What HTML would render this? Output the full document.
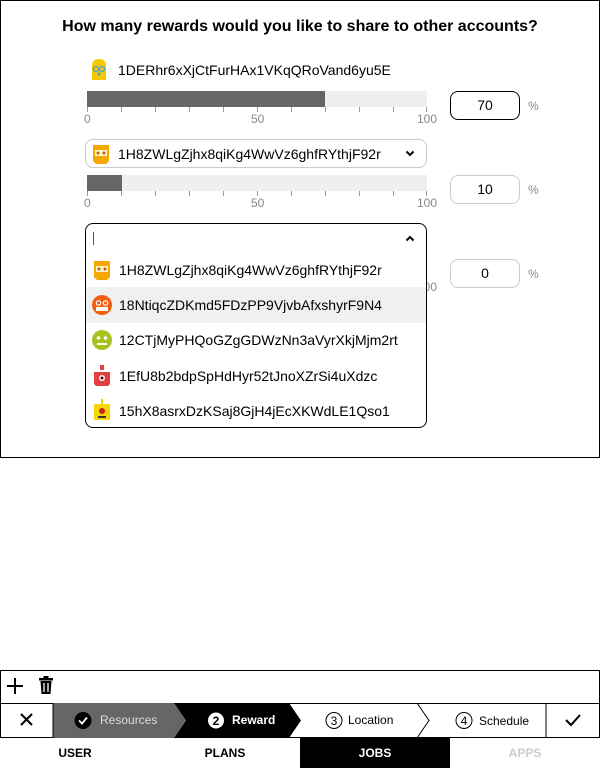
<!DOCTYPE html>
<html><head><meta charset="utf-8"><style>
*{box-sizing:border-box;margin:0;padding:0}
body{width:600px;height:768px;position:relative;background:#fff;font-family:"Liberation Sans",sans-serif;color:#000;overflow:hidden}
.a{position:absolute}
.title{left:0;top:18px;width:600px;text-align:center;font-weight:bold;font-size:16px}
.txt{font-size:14px;white-space:nowrap}
.bar{left:87px;width:340px;height:16px;background:#efefef}
.fill{left:0;top:0;height:16px;background:#666}
.tick{width:1px;height:5px;background:#999;top:16px}
.lbl{font-size:12px;color:#888}
.num{width:70px;height:29px;border-radius:8px;font-size:14px;text-align:center;line-height:27px}
.pct{font-size:12px;color:#888}
.item{left:0;width:340px;height:36px}
</style></head><body>
<div class="a" style="left:0;top:0;width:600px;height:458px;border:1px solid #000"></div>
<div class="a title">How many rewards would you like to share to other accounts?</div>

<svg class="a" style="left:88px;top:58px" width="22" height="24" viewBox="0 0 22 24"><path d="M4 22 L4 8 Q4 1 11 1 Q18 1 18 8 L18 22 Z" fill="#f5c800"/><circle cx="8" cy="11" r="2.5" fill="none" stroke="#4aa3df" stroke-width="1.3"/><circle cx="14" cy="11" r="2.5" fill="none" stroke="#4aa3df" stroke-width="1.3"/><circle cx="11" cy="16" r="1.5" fill="#4aa3df"/></svg>
<div class="a txt" style="left:118px;top:62px">1DERhr6xXjCtFurHAx1VKqQRoVand6yu5E</div>
<div class="a bar" style="top:91px"><div class="a fill" style="width:238px"></div>
<div class="a tick" style="left:0"></div><div class="a tick" style="left:34px"></div><div class="a tick" style="left:68px"></div><div class="a tick" style="left:102px"></div><div class="a tick" style="left:136px"></div><div class="a tick" style="left:170px"></div><div class="a tick" style="left:204px"></div><div class="a tick" style="left:238px"></div><div class="a tick" style="left:272px"></div><div class="a tick" style="left:306px"></div><div class="a tick" style="left:339px"></div></div>
<div class="a lbl" style="left:84px;top:112px">0</div><div class="a lbl" style="left:251px;top:112px">50</div><div class="a lbl" style="left:417px;top:112px">100</div>
<div class="a num" style="left:450px;top:91px;border:1px solid #000">70</div>
<div class="a pct" style="left:528px;top:99px">%</div>

<div class="a" style="left:85px;top:139px;width:342px;height:29px;border:1px solid #ccc;border-radius:8px"></div>
<svg class="a" style="left:90px;top:143px" width="22" height="22" viewBox="0 0 22 22"><path d="M3 2h16v16l-3 3H6l-3-3z" fill="#f5a800"/><rect x="5" y="7" width="12" height="6" fill="#fff" opacity=".8"/><circle cx="8" cy="10" r="1.5" fill="#b36b00"/><circle cx="14" cy="10" r="1.5" fill="#b36b00"/></svg>
<div class="a txt" style="left:118px;top:146px">1H8ZWLgZjhx8qiKg4WwVz6ghfRYthjF92r</div>
<svg class="a" style="left:405px;top:150px" width="10" height="7" viewBox="0 0 10 7"><path d="M1.5 1.5L5 5 8.5 1.5" fill="none" stroke="#000" stroke-width="2"/></svg>
<div class="a bar" style="top:175px"><div class="a fill" style="width:35px"></div>
<div class="a tick" style="left:0"></div><div class="a tick" style="left:34px"></div><div class="a tick" style="left:68px"></div><div class="a tick" style="left:102px"></div><div class="a tick" style="left:136px"></div><div class="a tick" style="left:170px"></div><div class="a tick" style="left:204px"></div><div class="a tick" style="left:238px"></div><div class="a tick" style="left:272px"></div><div class="a tick" style="left:306px"></div><div class="a tick" style="left:339px"></div></div>
<div class="a lbl" style="left:84px;top:196px">0</div><div class="a lbl" style="left:251px;top:196px">50</div><div class="a lbl" style="left:417px;top:196px">100</div>
<div class="a num" style="left:450px;top:175px;border:1px solid #ccc">10</div>
<div class="a pct" style="left:528px;top:183px">%</div>

<div class="a lbl" style="left:417px;top:280px">100</div>
<div class="a num" style="left:450px;top:259px;border:1px solid #ccc">0</div>
<div class="a pct" style="left:528px;top:267px">%</div>

<div class="a" style="left:85px;top:223px;width:342px;height:205px;border:1px solid #000;border-radius:8px;background:#fff;overflow:hidden">
<div class="a" style="left:7px;top:8px;width:1px;height:13px;background:#555"></div>
<svg class="a" style="left:319px;top:11px" width="10" height="7" viewBox="0 0 10 7"><path d="M1.5 5.5L5 2 8.5 5.5" fill="none" stroke="#000" stroke-width="2"/></svg>
<div class="a item" style="top:28px"><svg class="a" style="left:5px;top:7px" width="22" height="22" viewBox="0 0 22 22"><path d="M3 2h16v16l-3 3H6l-3-3z" fill="#f5a800"/><rect x="5" y="7" width="12" height="6" fill="#fff" opacity=".8"/><circle cx="8" cy="10" r="1.5" fill="#b36b00"/><circle cx="14" cy="10" r="1.5" fill="#b36b00"/></svg><div class="a txt" style="left:33px;top:10px">1H8ZWLgZjhx8qiKg4WwVz6ghfRYthjF92r</div></div>
<div class="a item" style="top:63px;background:#f0f0f0"><svg class="a" style="left:5px;top:7px" width="22" height="22" viewBox="0 0 22 22"><circle cx="11" cy="11" r="10" fill="#f06010"/><circle cx="7.5" cy="9" r="2.2" fill="none" stroke="#fff" stroke-width="1.2"/><circle cx="14.5" cy="9" r="2.2" fill="none" stroke="#fff" stroke-width="1.2"/><rect x="5" y="13" width="12" height="4" fill="#fff"/></svg><div class="a txt" style="left:33px;top:10px">18NtiqcZDKmd5FDzPP9VjvbAfxshyrF9N4</div></div>
<div class="a item" style="top:98px"><svg class="a" style="left:5px;top:7px" width="22" height="22" viewBox="0 0 22 22"><circle cx="11" cy="11" r="10" fill="#a8c020"/><circle cx="7.5" cy="9" r="1.8" fill="#fff"/><circle cx="14.5" cy="9" r="1.8" fill="#fff"/><rect x="6" y="14" width="10" height="2" fill="#fff"/></svg><div class="a txt" style="left:33px;top:10px">12CTjMyPHQoGZgGDWzNn3aVyrXkjMjm2rt</div></div>
<div class="a item" style="top:134px"><svg class="a" style="left:5px;top:6px" width="22" height="24" viewBox="0 0 22 24"><rect x="9" y="1" width="4" height="5" fill="#e04040"/><path d="M3 8h16v12l-2 2H5l-2-2z" fill="#e04040"/><circle cx="11" cy="14" r="3" fill="#fff"/><circle cx="11" cy="14" r="1.5" fill="#600"/></svg><div class="a txt" style="left:33px;top:10px">1EfU8b2bdpSpHdHyr52tJnoXZrSi4uXdzc</div></div>
<div class="a item" style="top:169px"><svg class="a" style="left:5px;top:5px" width="22" height="24" viewBox="0 0 22 24"><path d="M11 1v5" stroke="#f0d000" stroke-width="2"/><rect x="3" y="6" width="16" height="16" rx="2" fill="#f5d800"/><circle cx="11" cy="13" r="3" fill="#d02020"/><rect x="7" y="18" width="8" height="2" fill="#333"/></svg><div class="a txt" style="left:33px;top:10px">15hX8asrxDzKSaj8GjH4jEcXKWdLE1Qso1</div></div>
</div>

<div class="a" style="left:0;top:670px;width:600px;height:34px;border:1px solid #000"></div>
<svg class="a" style="left:5px;top:676px" width="20" height="20" viewBox="0 0 20 20"><path d="M10 2v16M2 10h16" stroke="#000" stroke-width="2"/></svg>
<svg class="a" style="left:38px;top:676px" width="16" height="19" viewBox="0 0 16 19"><rect x="1" y="2" width="14" height="2.5" fill="#000"/><rect x="5.5" y="0" width="5" height="2.5" fill="#000"/><path d="M2.5 5h11l-1 13h-9z" fill="#000"/><path d="M6 7v9M10 7v9" stroke="#fff" stroke-width="1.3"/></svg>

<div class="a" style="left:0;top:703px;width:600px;height:35px;border:1px solid #000;border-top:none"></div>
<svg class="a" style="left:0;top:703px" width="600" height="35" viewBox="0 0 600 35">
<path d="M53 0H174L186 17.5 174 35H53z" fill="#666"/>
<path d="M174 0H289L301 17.5 289 35H174L186 17.5z" fill="#000"/>
<path d="M417 0L429 17.5 417 35" fill="none" stroke="#000"/>
<path d="M53 0V35M546 0V35" stroke="#000"/>
<path d="M21 11l11 11M32 11L21 22" stroke="#000" stroke-width="2"/>
<path d="M566 17l5 5 9-10" fill="none" stroke="#000" stroke-width="2"/>
<circle cx="83" cy="17.5" r="8.5" fill="#000"/><path d="M79 17.5l3 3 5-6" fill="none" stroke="#fff" stroke-width="1.8"/>
<circle cx="216" cy="17.5" r="8" fill="#fff"/><text x="216" y="22" font-size="12" font-weight="bold" text-anchor="middle" font-family="Liberation Sans">2</text>
<circle cx="334" cy="17.5" r="8" fill="none" stroke="#000"/><text x="334" y="22" font-size="12" text-anchor="middle" font-family="Liberation Sans">3</text>
<circle cx="464" cy="17.5" r="8" fill="none" stroke="#000"/><text x="464" y="22" font-size="12" text-anchor="middle" font-family="Liberation Sans">4</text>
</svg>
<div class="a" style="left:100px;top:713px;font-size:12px;color:#ddd">Resources</div>
<div class="a" style="left:232px;top:713px;font-size:12px;color:#fff;font-weight:bold">Reward</div>
<div class="a" style="left:348px;top:713px;font-size:12px">Location</div>
<div class="a" style="left:479px;top:714px;font-size:12px">Schedule</div>

<div class="a" style="left:300px;top:738px;width:150px;height:30px;background:#000"></div>
<div class="a" style="left:0;top:746px;width:150px;text-align:center;font-size:12px;font-weight:bold">USER</div>
<div class="a" style="left:150px;top:746px;width:150px;text-align:center;font-size:12px;font-weight:bold">PLANS</div>
<div class="a" style="left:300px;top:746px;width:150px;text-align:center;font-size:12px;font-weight:bold;color:#fff">JOBS</div>
<div class="a" style="left:450px;top:746px;width:150px;text-align:center;font-size:12px;font-weight:bold;color:#ccc">APPS</div>
</body></html>
